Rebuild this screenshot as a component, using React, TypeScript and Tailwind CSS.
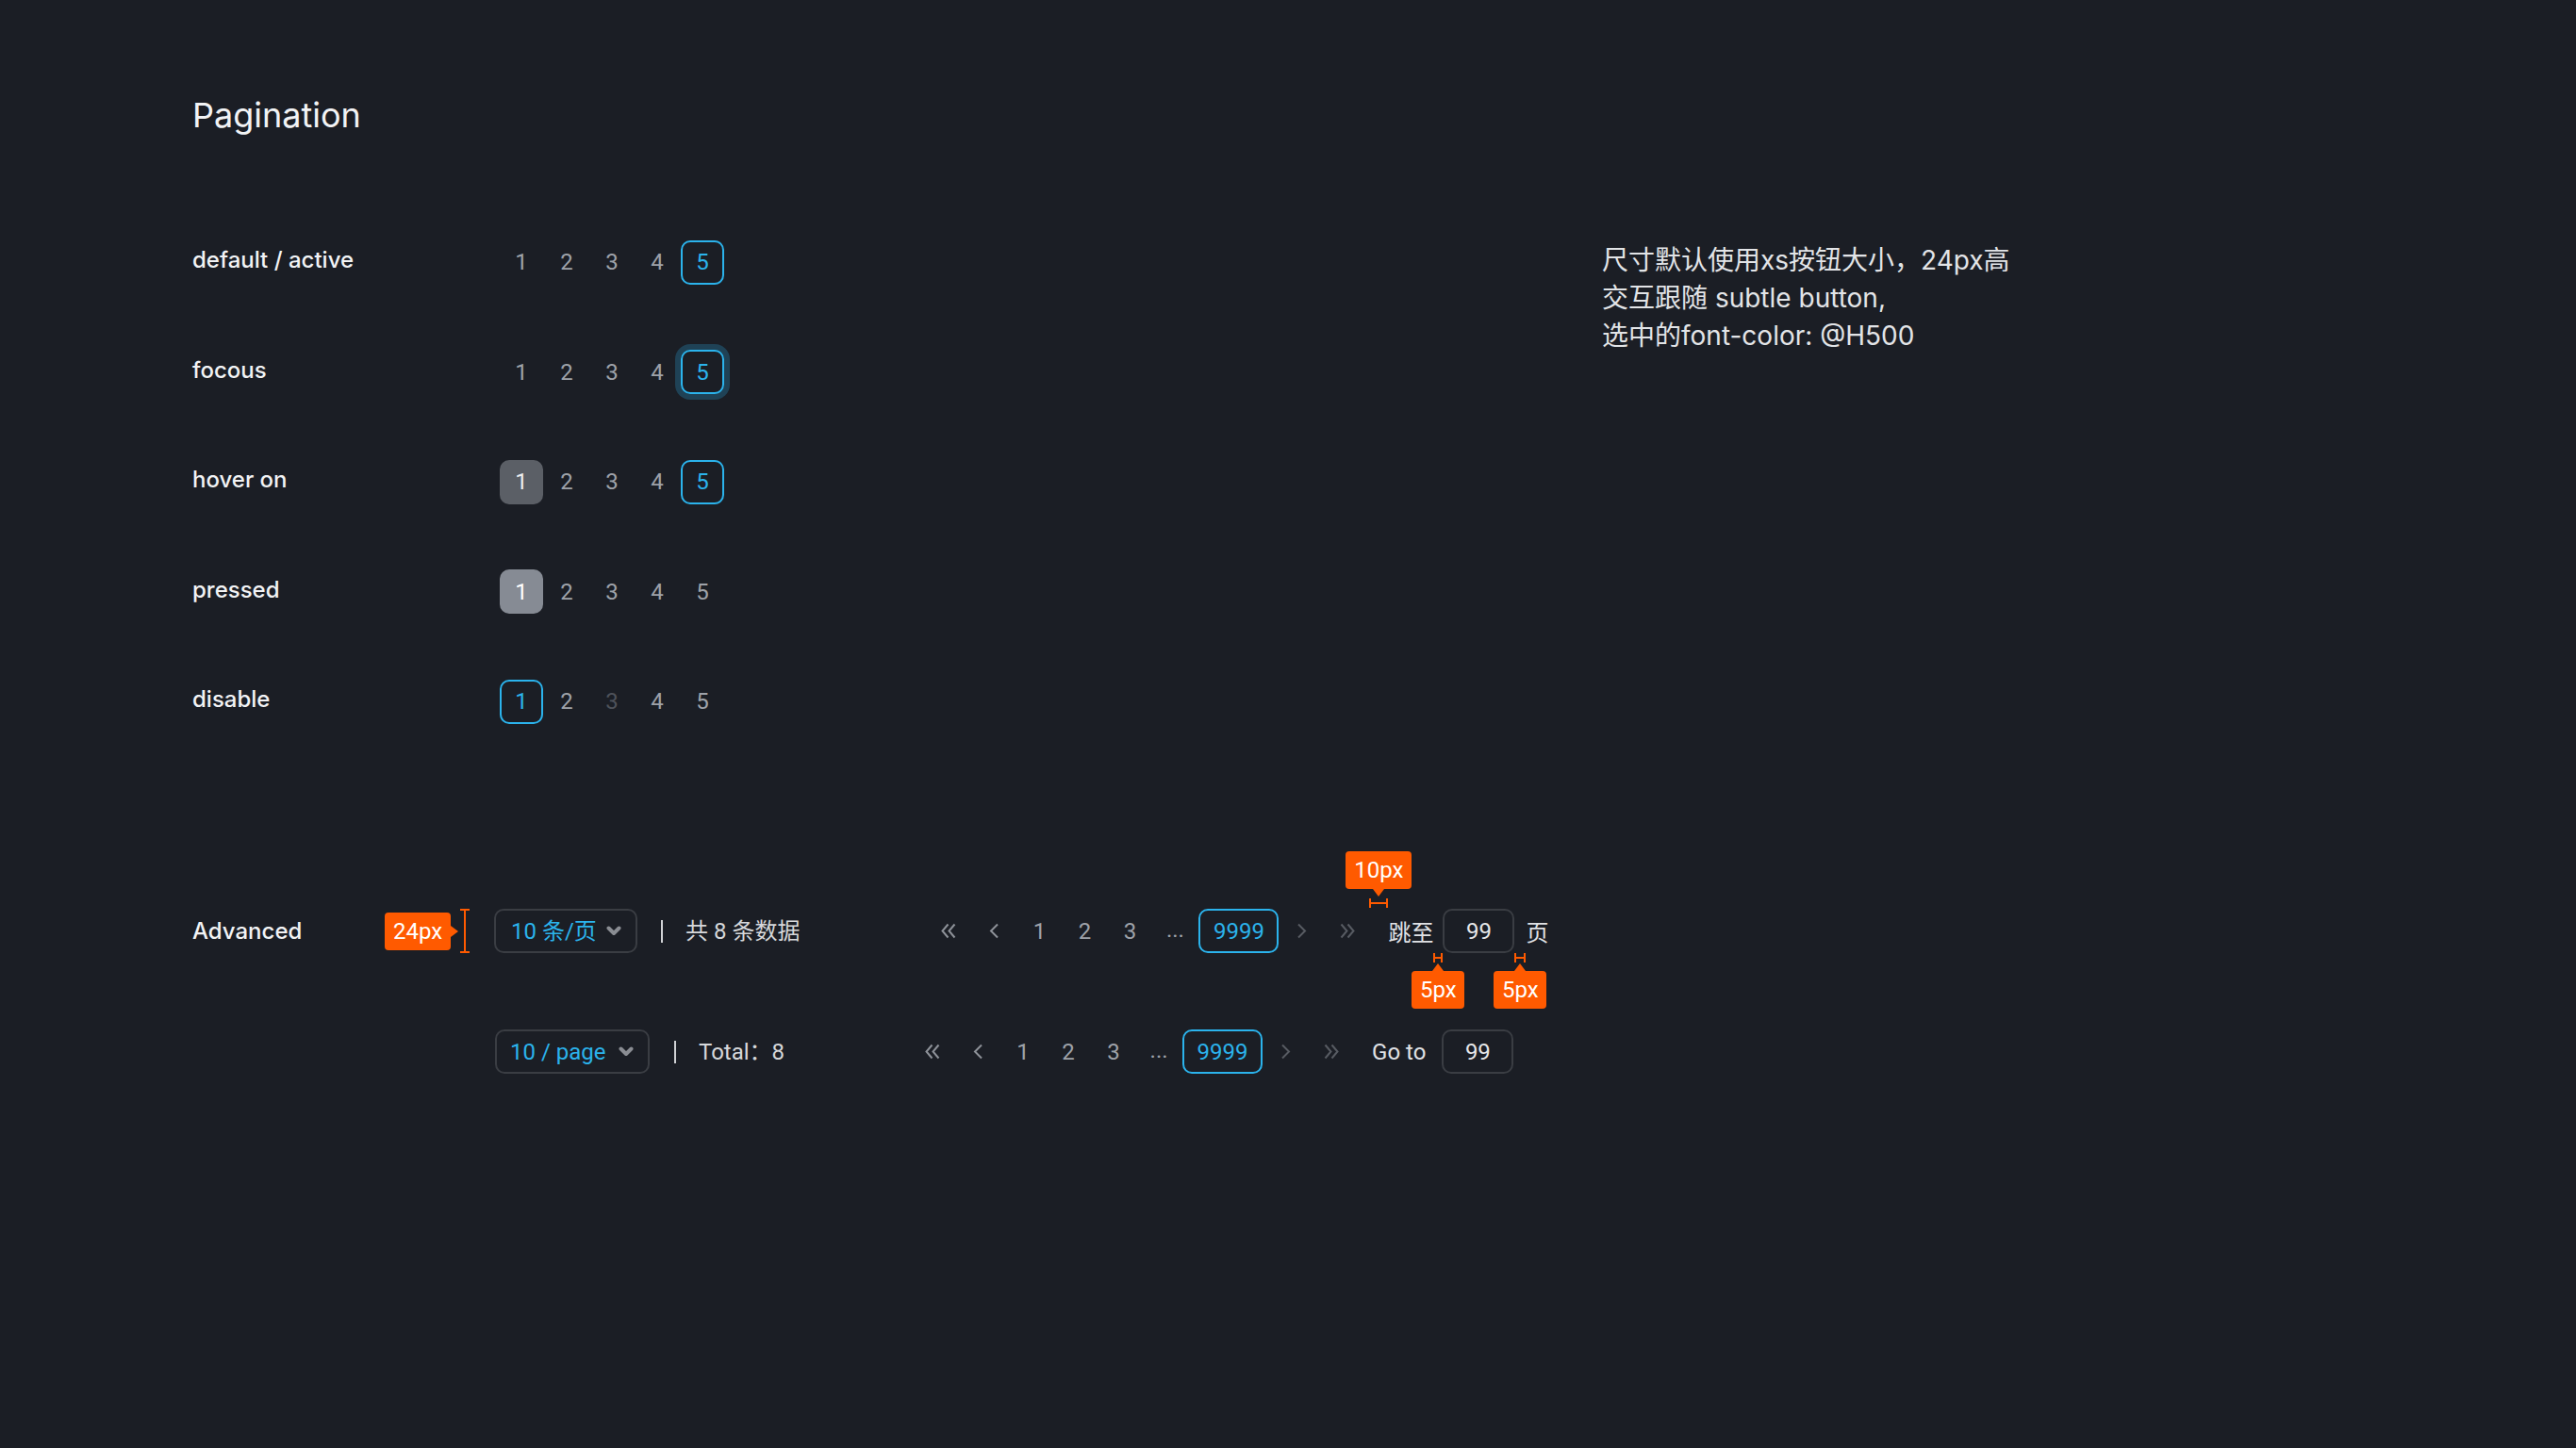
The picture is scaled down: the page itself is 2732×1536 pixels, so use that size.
import React from "react";

const ORANGE = "bg-[#ff5a00]";

type PageState = "default" | "active" | "focus" | "hover" | "pressed" | "disabled";

function PageItem(props: { label: string; state?: PageState }) {
  const s = props.state ?? "default";
  let cls = "text-[#9ea2a9]";
  if (s === "active") cls = "border-2 border-[#2bb3ec] text-[#2bb3ec]";
  if (s === "focus") cls = "border-2 border-[#2bb3ec] text-[#2bb3ec] shadow-[0_0_0_6px_#1f4256]";
  if (s === "hover") cls = "bg-[#5b5f66] text-[#eceef0]";
  if (s === "pressed") cls = "bg-[#868b94] text-white";
  if (s === "disabled") cls = "text-[#4e525a]";
  return (
    <div
      className={`w-[46px] h-[47px] rounded-[10px] flex items-center justify-center text-[24px] leading-none font-['Roboto',sans-serif] ${cls}`}
    >
      {props.label}
    </div>
  );
}

function StateRow(props: { label: string; states: PageState[] }) {
  return (
    <div className="flex h-[48px] items-center">
      <div className="w-[326px] pb-[4px] text-[24px] font-medium text-[#f2f3f5]">{props.label}</div>
      <div className="flex gap-[2px]">
        {props.states.map((st, i) => (
          <PageItem key={i} label={String(i + 1)} state={st} />
        ))}
      </div>
    </div>
  );
}

function Chevron(props: { dir: "left" | "right"; double?: boolean; muted?: boolean }) {
  const color = props.muted ? "#575b62" : "#8d9198";
  const flip = props.dir === "right" ? "scale(-1,1)" : undefined;
  return (
    <div className="w-[46px] h-[47px] flex items-center justify-center">
      {props.double ? (
        <svg width="16" height="17" viewBox="0 0 16 17" style={{ transform: flip }}>
          <polyline points="7.5,1.5 1.5,8.5 7.5,15.5" fill="none" stroke={color} strokeWidth="2" />
          <polyline points="14.5,1.5 8.5,8.5 14.5,15.5" fill="none" stroke={color} strokeWidth="2" />
        </svg>
      ) : (
        <svg width="10" height="17" viewBox="0 0 10 17" style={{ transform: flip }}>
          <polyline points="9,1.5 2,8.5 9,15.5" fill="none" stroke={color} strokeWidth="2" />
        </svg>
      )}
    </div>
  );
}

function Pager() {
  return (
    <div className="flex gap-[2px] font-['Roboto',sans-serif]">
      <Chevron dir="left" double />
      <Chevron dir="left" />
      <PageItem label="1" />
      <PageItem label="2" />
      <PageItem label="3" />
      <div className="w-[46px] h-[47px] flex items-center justify-center text-[24px] text-[#9ea2a9] pb-[4px]">...</div>
      <div className="w-[85px] h-[47px] rounded-[10px] border-2 border-[#2bb3ec] text-[#2bb3ec] flex items-center justify-center text-[24px]">
        9999
      </div>
      <Chevron dir="right" muted />
      <Chevron dir="right" double muted />
    </div>
  );
}

function Caret() {
  return (
    <svg width="16" height="11" viewBox="0 0 16 11">
      <polyline
        points="2.5,2.5 8,8 13.5,2.5"
        fill="none"
        stroke="#8a8d93"
        strokeWidth="4"
        strokeLinecap="round"
        strokeLinejoin="round"
      />
    </svg>
  );
}

function HMarker() {
  return (
    <div className="absolute inset-x-0 h-[10px] flex items-center">
      <div className="w-[2px] h-[10px] bg-[#ff5a00]" />
      <div className="flex-1 h-[2px] bg-[#ff5a00]" />
      <div className="w-[2px] h-[10px] bg-[#ff5a00]" />
    </div>
  );
}

function GapNoteBelow(props: { widthClass: string; badgeLeft: string }) {
  return (
    <div className={`relative h-[47px] ${props.widthClass}`}>
      <div className="absolute inset-x-0 top-[47px]">
        <HMarker />
      </div>
      <div className={`absolute top-[58px] ${props.badgeLeft} w-[56px] flex flex-col items-center`}>
        <div className="w-0 h-0 border-x-[6px] border-x-transparent border-b-[8px] border-b-[#ff5a00]" />
        <div className={`w-[56px] h-[40px] rounded-[4px] ${ORANGE} flex items-center justify-center text-white text-[24px] font-['Roboto',sans-serif]`}>
          5px
        </div>
      </div>
    </div>
  );
}

function JumpGapAbove() {
  return (
    <div className="relative w-[20px] h-[47px]">
      <div className="absolute left-[-25px] top-[-61px] w-[70px] flex flex-col items-center">
        <div className={`w-[70px] h-[40px] rounded-[4px] ${ORANGE} flex items-center justify-center text-white text-[24px] font-['Roboto',sans-serif]`}>
          10px
        </div>
        <div className="w-0 h-0 border-x-[6px] border-x-transparent border-t-[8px] border-t-[#ff5a00]" />
      </div>
      <div className="absolute inset-x-0 top-[-11px]">
        <HMarker />
      </div>
    </div>
  );
}

function SizeSelect(props: { text: string; width: string; pl: string; annotate?: boolean }) {
  return (
    <div className="relative">
      {props.annotate && (
        <>
          <div className="absolute left-[-116px] top-[4px] flex items-center">
            <div className={`w-[70px] h-[40px] rounded-[4px] ${ORANGE} flex items-center justify-center text-white text-[24px] font-['Roboto',sans-serif]`}>
              24px
            </div>
            <div className="w-0 h-0 border-y-[6px] border-y-transparent border-l-[8px] border-l-[#ff5a00]" />
          </div>
          <div className="absolute left-[-36px] top-0 w-[10px] h-[47px] flex flex-col items-center">
            <div className="w-[10px] h-[2px] bg-[#ff5a00]" />
            <div className="flex-1 w-[2px] bg-[#ff5a00]" />
            <div className="w-[10px] h-[2px] bg-[#ff5a00]" />
          </div>
        </>
      )}
      <div
        className={`${props.width} ${props.pl} h-[47px] rounded-[10px] border-2 border-[#3a3d43] flex items-center justify-between pr-[15px] text-[24px] text-[#2bb3ec] font-['Roboto','Noto_Sans_CJK_SC',sans-serif]`}
      >
        <span>{props.text}</span>
        <Caret />
      </div>
    </div>
  );
}

function JumpInput() {
  return (
    <div className="w-[76px] h-[47px] rounded-[10px] border-2 border-[#3a3d43] flex items-center justify-center text-[24px] text-[#e6e7e9] font-['Roboto',sans-serif]">
      99
    </div>
  );
}

export default function App() {
  return (
    <div className="min-h-screen w-full bg-[#1b1e25] pl-[204px] pt-[104px] font-['Inter','Noto_Sans_CJK_SC',sans-serif] text-[#f2f3f5]">
      <h1 className="text-[36px] leading-[36px] font-normal">Pagination</h1>

      <div className="mt-[114px] flex">
        <div className="w-[1495px] flex flex-col gap-[68.5px]">
          <StateRow label="default / active" states={["default", "default", "default", "default", "active"]} />
          <StateRow label="focous" states={["default", "default", "default", "default", "focus"]} />
          <StateRow label="hover on" states={["hover", "default", "default", "default", "active"]} />
          <StateRow label="pressed" states={["pressed", "default", "default", "default", "default"]} />
          <StateRow label="disable" states={["active", "default", "disabled", "default", "default"]} />
        </div>
        <div className="mt-[2px] text-[28px] leading-[40px] text-[#e2e4e7]">
          <p>尺寸默认使用xs按钮大小，24px高</p>
          <p>交互跟随 subtle button,</p>
          <p>选中的font-color: @H500</p>
        </div>
      </div>

      <div className="mt-[196px] flex flex-col gap-[81px]">
        <div className="flex h-[47px] items-center">
          <div className="w-[320px] text-[24px] font-medium">Advanced</div>
          <SizeSelect text="10 条/页" width="w-[152px]" pl="pl-[16px]" annotate />
          <div className="ml-[25px] w-[2px] h-[24px] bg-[#d0d2d5]" />
          <div className="ml-[24px] text-[24px] text-[#d6d8db] font-['Roboto','Noto_Sans_CJK_SC',sans-serif]">共 8 条数据</div>
          <div className="ml-[135px]">
            <Pager />
          </div>
          <JumpGapAbove />
          <div className="text-[24px] text-[#e0e2e5] font-['Noto_Sans_CJK_SC',sans-serif]">跳至</div>
          <GapNoteBelow widthClass="w-[10px]" badgeLeft="left-[-23px]" />
          <JumpInput />
          <GapNoteBelow widthClass="w-[12px]" badgeLeft="left-[-22px]" />
          <div className="text-[24px] text-[#e0e2e5] font-['Noto_Sans_CJK_SC',sans-serif]">页</div>
        </div>

        <div className="flex h-[47px] items-center">
          <div className="w-[321px]" />
          <SizeSelect text="10 / page" width="w-[164px]" pl="pl-[14px]" />
          <div className="ml-[26px] w-[2px] h-[24px] bg-[#d0d2d5]" />
          <div className="ml-[24px] text-[24px] text-[#d6d8db] font-['Roboto','Noto_Sans_CJK_SC',sans-serif]">Total：8</div>
          <div className="ml-[134px]">
            <Pager />
          </div>
          <div className="w-[20px]" />
          <div className="text-[24px] text-[#e0e2e5] font-['Roboto',sans-serif]">Go to</div>
          <div className="w-[17px]" />
          <JumpInput />
        </div>
      </div>
    </div>
  );
}
